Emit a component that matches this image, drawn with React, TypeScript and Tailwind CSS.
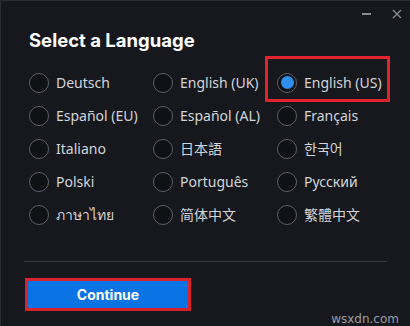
const languages = [
    'Deutsch', 'English (UK)', 'English (US)',
    'Español (EU)', 'Español (AL)', 'Français',
    'Italiano', '日本語', '한국어',
    'Polski', 'Português', 'Русский',
    'ภาษาไทย', '简体中文', '繁體中文',
];

const selected = 'English (US)';

function Radio({ checked }: { checked: boolean }) {
    return (
        <span className="flex h-[20px] w-[20px] shrink-0 items-center justify-center rounded-full border-[1.5px] border-[#5d6068] bg-[#0f1115]">
            {checked && <span className="h-[13px] w-[13px] rounded-full bg-[#2f8ff0]" />}
        </span>
    );
}

export default function App() {
    return (
        <div
            className="relative h-[326px] w-[410px] overflow-hidden border-l border-t border-[#2a2d35] bg-[#16181e]"
            style={{ fontFamily: '"Noto Sans", "Noto Sans CJK SC", sans-serif' }}
        >
            {/* Window controls */}
            <span className="absolute left-[361px] top-[12px] h-[1.5px] w-[9px] bg-[#8a8d94]" />
            <svg
                className="absolute left-[391px] top-[8px] text-[#8a8d94]"
                width="10"
                height="10"
                viewBox="0 0 10 10"
                stroke="currentColor"
                strokeWidth="1.2"
            >
                <path d="M1 1l8 8M9 1l-8 8" />
            </svg>

            <h1
                className="pl-[28px] pt-[27px] text-[18.5px] font-bold leading-[24px] text-white"
                style={{ fontFamily: 'Inter, sans-serif' }}
            >
                Select a Language
            </h1>

            {/* Language grid */}
            <div className="mt-[14px] grid grid-cols-[124px_124px_124px] pl-[28px]">
                {languages.map((lang) => (
                    <div key={lang} className="relative flex h-[33px] items-center gap-[7px]">
                        <Radio checked={lang === selected} />
                        <span className="whitespace-nowrap text-[14px] text-[#d3d5d9]">{lang}</span>
                        {lang === selected && (
                            <span className="pointer-events-none absolute -left-[12px] -top-[10px] h-[46px] w-[125px] border-[3px] border-[#e0232d]" />
                        )}
                    </div>
                ))}
            </div>

            <div className="mx-[23px] mt-[30px] h-px bg-[#34373f]" />

            <div className="relative pl-[24px] pt-[16px]">
                <button
                    className="flex h-[33px] w-[166px] items-center justify-center border-[3px] border-[#d8222c] bg-[#0b74e5] text-[14px] font-bold text-white"
                    style={{ fontFamily: 'Inter, sans-serif' }}
                >
                    Continue
                </button>
                <span
                    className="absolute right-[11px] top-[50px] text-[12px] leading-[14px] text-[#9a9da3]"
                    style={{ fontFamily: '"DejaVu Sans", sans-serif' }}
                >
                    wsxdn.com
                </span>
            </div>
        </div>
    );
}
